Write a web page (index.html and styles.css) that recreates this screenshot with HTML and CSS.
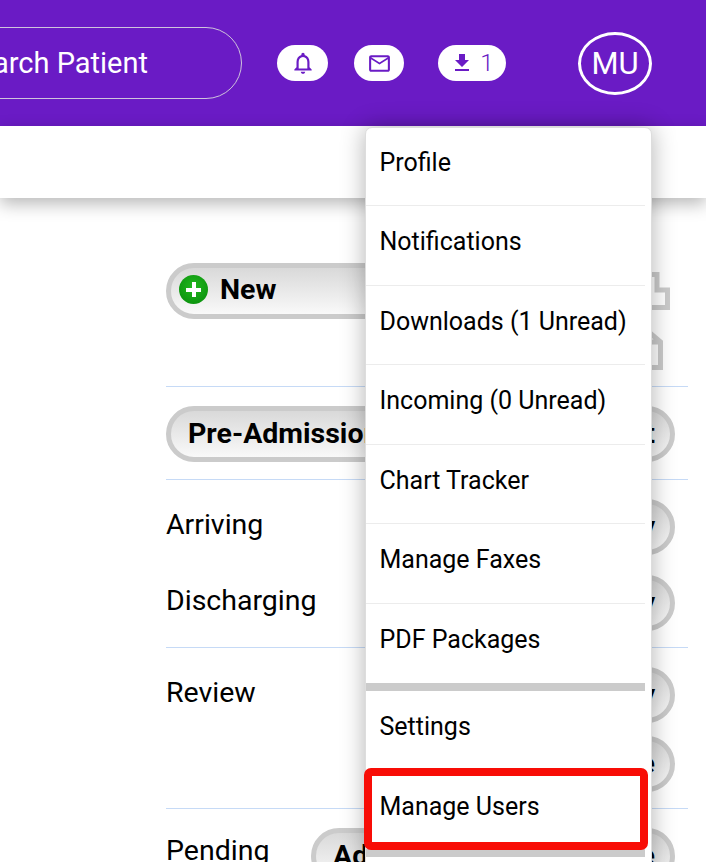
FILE: index.html
```html
<!DOCTYPE html>
<html lang="en">
<head>
  <meta charset="UTF-8">
  <meta name="viewport" content="width=device-width, initial-scale=1.0">
  <title>Manage Users</title>
  <link rel="stylesheet" href="styles.css">
</head>
<body>
  <header class="topbar">
    <div class="search">Search Patient</div>
    <button class="pill pill-bell" aria-label="Notifications">
      <svg viewBox="0 0 24 24" width="26" height="26"><path d="M12 22c1.1 0 2-.9 2-2h-4c0 1.1.9 2 2 2zm6-6v-5c0-3.07-1.63-5.64-4.5-6.32V4c0-.83-.67-1.5-1.5-1.5s-1.5.67-1.5 1.5v.68C7.64 5.36 6 7.92 6 11v5l-2 2v1h16v-1l-2-2zm-2 1H8v-6c0-2.48 1.51-4.5 4-4.5s4 2.02 4 4.5v6z"/></svg>
    </button>
    <button class="pill pill-mail" aria-label="Incoming">
      <svg viewBox="0 0 24 24" width="25" height="25"><path d="M20 4H4c-1.1 0-1.99.9-1.99 2L2 18c0 1.1.9 2 2 2h16c1.1 0 2-.9 2-2V6c0-1.1-.9-2-2-2zm0 14H4V8l8 5 8-5v10zm-8-7L4 6h16l-8 5z"/></svg>
    </button>
    <button class="pill pill-download" aria-label="Downloads">
      <svg viewBox="0 0 24 24" width="24" height="24"><path d="M19 9h-4V3H9v6H5l7 7 7-7zM5 18v2h14v-2H5z"/></svg>
      <span>1</span>
    </button>
    <div class="avatar">MU</div>
  </header>

  <div class="subbar"></div>

  <main class="content">
    <section class="group group-new">
      <div class="row">
        <button class="btn btn-new">
          <span class="plus"></span>
          New
        </button>
        <div class="doc-icons">
          <svg viewBox="0 0 40 40" width="40" height="40"><path d="M5 2.5h22V18h10.5v17.5H5z"/></svg>
          <svg viewBox="0 0 40 42" width="40" height="42"><path d="M5 3h15l10.5 9v25.5H5zM20 12h10.5"/></svg>
        </div>
      </div>
    </section>

    <section class="group group-pre">
      <div class="row">
        <button class="btn btn-pre">Pre-Admission</button>
        <button class="btn btn-right">Current</button>
      </div>
    </section>

    <section class="group">
      <div class="row">
        <span class="label">Arriving</span>
        <button class="btn btn-right">Today</button>
      </div>
      <div class="row">
        <span class="label">Discharging</span>
        <button class="btn btn-right">Today</button>
      </div>
    </section>

    <section class="group">
      <div class="row row-tight">
        <span class="label">Review</span>
        <button class="btn btn-right">Today</button>
      </div>
      <div class="row row-end">
        <button class="btn btn-right">Late</button>
      </div>
    </section>

    <section class="group">
      <div class="row">
        <span class="label label-pending">Pending</span>
        <button class="btn btn-add">Admit</button>
        <button class="btn btn-right">Late</button>
      </div>
    </section>
  </main>

  <nav class="menu">
    <a class="menu-item">Profile</a>
    <a class="menu-item">Notifications</a>
    <a class="menu-item">Downloads (1 Unread)</a>
    <a class="menu-item">Incoming (0 Unread)</a>
    <a class="menu-item">Chart Tracker</a>
    <a class="menu-item">Manage Faxes</a>
    <a class="menu-item item-thick item-packages">PDF Packages</a>
    <a class="menu-item">Settings</a>
    <a class="menu-item item-thick item-marked">Manage Users<span class="red-box"></span></a>
  </nav>
</body>
</html>
```

FILE: styles.css
```css
html, body {
  height: 862px;
  overflow: hidden;
}
body {
  margin: 0;
  position: relative;
  background: #fff;
  font-family: Roboto, "Liberation Sans", sans-serif;
  color: #000;
}
button {
  font-family: inherit;
  cursor: pointer;
}

/* top bar */
.topbar {
  height: 126px;
  display: flex;
  align-items: center;
  justify-content: flex-end;
  padding-right: 54px;
  background-color: #6a1bc5;
}
.search {
  flex-shrink: 0;
  box-sizing: border-box;
  height: 72px;
  line-height: 70px;
  margin-right: 35px;
  padding: 0 93px 0 60px;
  border: 1px solid #cfc4dc;
  border-radius: 36px;
  color: #fff;
  font-size: 29px;
  white-space: nowrap;
}
.pill {
  flex-shrink: 0;
  display: flex;
  align-items: center;
  justify-content: center;
  height: 36px;
  padding: 0;
  border: none;
  border-radius: 18px;
  background: #fff;
  color: #6a1bc5;
}
.pill svg {
  fill: #6a1bc5;
}
.pill-bell {
  width: 51px;
  margin-right: 26px;
}
.pill-mail {
  width: 50px;
  margin-right: 34px;
}
.pill-download {
  width: 68px;
  gap: 6px;
  margin-right: 72px;
  font-size: 24px;
  font-weight: 300;
}
.avatar {
  flex-shrink: 0;
  box-sizing: border-box;
  width: 74px;
  height: 63px;
  line-height: 57px;
  border: 3px solid #fff;
  border-radius: 50%;
  color: #fff;
  font-size: 31px;
  text-align: center;
}

.subbar {
  height: 72px;
  background: #fff;
  box-shadow: 0 6px 16px rgba(0, 0, 0, 0.28);
}

/* main list */
.content {
  padding: 0 18px 0 166px;
}
.group {
  padding: 19px 13px 16px 0;
  border-top: 1px solid #c6daf6;
}
.group-new {
  height: 123px;
  box-sizing: border-box;
  margin-top: 65px;
  padding: 0 18px 0 0;
  border-top: none;
}
.group-pre {
  padding-bottom: 17px;
}
.row {
  display: flex;
  align-items: flex-start;
  justify-content: space-between;
  margin-bottom: 20px;
}
.row:last-child {
  margin-bottom: 0;
}
.row-tight {
  margin-bottom: 13px;
}
.row-end {
  justify-content: flex-end;
}
.label {
  font-size: 28.5px;
  line-height: 51px;
}
.label-pending {
  width: 145px;
  line-height: 46px;
}
.btn {
  flex-shrink: 0;
  box-sizing: border-box;
  height: 56px;
  padding: 0 17px 2px;
  border: 5px solid #cbcbcb;
  border-radius: 28px;
  background: linear-gradient(#d9d9d9, #f9f9f9);
  color: #000;
  font-size: 28.5px;
  font-weight: 700;
  white-space: nowrap;
}
.btn-new {
  display: flex;
  align-items: center;
  gap: 12px;
  width: 300px;
  padding: 0 8px 3px;
}
.plus {
  position: relative;
  width: 29px;
  height: 29px;
  border-radius: 50%;
  background: radial-gradient(circle at 50% 40%, #22b81f, #068a0a);
}
.plus::before,
.plus::after {
  content: "";
  position: absolute;
  background: #fff;
}
.plus::before {
  left: 7px;
  top: 12.5px;
  width: 15px;
  height: 4px;
}
.plus::after {
  left: 12.5px;
  top: 7px;
  width: 4px;
  height: 15px;
}
.btn-pre {
  width: 300px;
  text-align: left;
}
.btn-right {
  width: 180px;
  padding-right: 15px;
  text-align: right;
}
.btn-add {
  width: 150px;
  margin-right: auto;
  text-align: left;
}
.doc-icons {
  display: flex;
  flex-direction: column;
  gap: 18px;
  margin-top: 9px;
}
.doc-icons svg {
  display: block;
  fill: none;
  stroke: #cbcbcb;
  stroke-width: 5;
}

/* dropdown over the page */
.menu {
  position: absolute;
  top: 127px;
  left: 365px;
  box-sizing: border-box;
  width: 287px;
  padding: 0 6px 60px 0;
  background: #fff;
  border: 1px solid #ddd;
  border-radius: 7px;
  box-shadow: 0 0 24px rgba(0, 0, 0, 0.3);
}
.menu-item {
  display: block;
  padding: 21px 13.5px 27.5px;
  border-bottom: 1px solid #ececec;
  font-size: 25px;
  line-height: 30px;
  white-space: nowrap;
}
.menu-item:first-child {
  padding-top: 19.5px;
  padding-bottom: 27.5px;
}
.item-thick {
  border-bottom: 8px solid #cbcbcb;
}
.item-packages {
  padding-bottom: 28.5px;
}
.item-marked {
  position: relative;
}
.red-box {
  position: absolute;
  top: -3px;
  left: -2px;
  right: -3px;
  bottom: -1px;
  border: 8px solid #f80d06;
  border-radius: 7px;
}
```
